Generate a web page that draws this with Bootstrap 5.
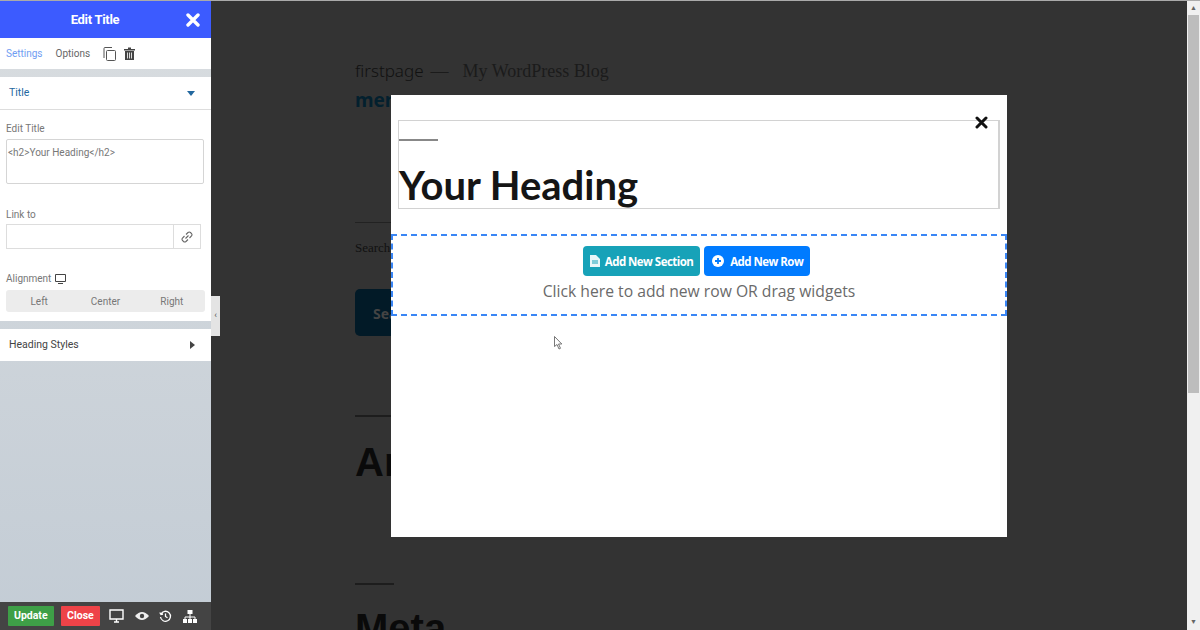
<!DOCTYPE html>
<html lang="en"><head><meta charset="utf-8"><title>Edit Title</title>
<link href="https://cdn.jsdelivr.net/npm/bootstrap@5.3.0/dist/css/bootstrap.min.css" rel="stylesheet">
<style>
html,body{height:630px;overflow:hidden;margin:0}
body{font-family:Roboto,sans-serif;background:#333;position:relative}
.stage{height:630px;border-top:1px solid #aaa}
.panel{width:211px;flex:none;height:629px;background:linear-gradient(#d9dde0,#c3ccd5);color:#666;font-size:10px}
.ph{height:37px;background:#3c5bff;color:#fff;font-size:13px;font-weight:700;letter-spacing:-.3px;padding-right:11px}
.ph span{flex:1;text-align:center;padding-left:4px}
.tabs{height:31px;background:#fff;font-size:10px;padding-left:6px;gap:13px}
.tabs .on{color:#6f9df2}
.sec{background:#fff}
.acc{height:33px;padding:0 16px 0 9px;font-size:10.5px;border-bottom:1px solid #ddd}
.acc.t{color:#23689f;margin-top:8px}
.acc.h{color:#444;border:0;height:32px;margin-top:8px}
.body1{height:211px;padding:0 6px;position:relative}
.lbl{display:block;font-size:10px;color:#777;line-height:12px}
.l1{padding-top:13px}
.l2{margin-top:25px}
.l3{margin-top:24px}
.ta{height:45px;width:198px;border:1px solid #d5d5d5;border-radius:2px;font-size:10px;color:#777;padding:5px 1px;margin-top:4px}
.lnk{height:25px;width:195px;border:1px solid #ddd;margin-top:3px}
.lnk i{margin-left:auto;width:27px;border-left:1px solid #ddd}
.seg{height:22px;width:199px;background:#ececec;border-radius:3px;color:#777;margin-top:5px}
.seg span{flex:1;text-align:center}
.hdl{position:absolute;left:211px;top:296px;width:9px;height:40px;background:#e4e4e4;color:#555;font-size:9px}
.foot{height:28px;background:#444;margin-top:auto;padding-left:8px}
.fb{height:20px;padding:0 6px;color:#fff;font-size:10.5px;font-weight:700;border-radius:1px}
.fb.u{background:#3e9f47}.fb.c{background:#ee4348;margin-left:7px;margin-right:9px;padding:0 6.500px}
.ticons{gap:10.500px}
.page{flex:1;padding:58px 0 0 144px;color:#111;overflow:hidden}
.p1{font:300 17px "Noto Sans",sans-serif;height:28px;white-space:nowrap;color:#111}
.p1 em{font:18px "Liberation Serif",serif;color:#1b1b1b;font-style:normal;margin-left:7px}
.p1 em.tg{margin-left:14px}
.p2{font:700 19px "Noto Sans",sans-serif;color:#03202e;height:135px}
.rule{height:1px;width:295px;background:#222}
.srch{font:13px "Liberation Serif",serif;color:#111;height:66px;padding-top:17px}
.sbtn{width:90px;height:47px;background:#021a27;border-radius:5px;color:#444;font:700 14px "Noto Sans",sans-serif;padding:15px 0 0 18px}
.bar{width:39px;height:2px;background:#1d1d1d}
.b1{margin-top:79px}
.big{font:700 40px "Liberation Sans",sans-serif;color:#0a0a0a}
.a1{margin-top:23px;height:143px}
.a2{margin-top:21px}
.sb{width:13px;flex:none;background:#f0f0f0;height:629px;color:#666;font-size:7px;text-align:center;line-height:14px}
.sb div{height:378px;width:11px;margin:0 0 0 1px;background:#bdbdbd}
.sb .dn{margin-top:222px;display:block}
.dlg{position:absolute;left:391px;top:95px;width:616px;height:442px;background:#fff}
.xbtn{position:absolute;left:584px;top:21px;width:13px;height:13px}
.hbox{margin:25px 7px 0;height:89px;border:1px solid #d2d2d2;position:relative;border-right-width:2px}
.hbox .ln{width:39px;height:2px;background:#888;margin-top:18px}
.hbox h2{font:700 40px Lato,sans-serif;color:#151515;margin:18px 0 0 0;line-height:52px}
.zone{margin-top:25px;height:82px;border:2px dashed #3a86f5;text-align:center;padding-top:10px}
.btnrow{padding-right:5px}
.ab{height:30px;border-radius:4px;color:#fff;font:700 11.500px "Open Sans",sans-serif;letter-spacing:-.55px;padding:0 7px;gap:5px}
.ab.a{background:#17a2b8}.ab.b{background:#007bff;margin-left:4px;padding:0 7px 0 8px;gap:6px}
.hint{font:15.700px "Open Sans",sans-serif;color:#6a6a6a;line-height:22px;margin-top:4px}
.cur{position:absolute;left:163px;top:241px}
</style></head><body>
<div class="stage d-flex">
 <aside class="panel d-flex flex-column">
  <div class="ph d-flex align-items-center"><span>Edit Title</span>
   <svg width="14" height="14" viewBox="0 0 14 14"><path d="M2 2 12 12M12 2 2 12" stroke="#fff" stroke-width="3.4" stroke-linecap="round"/></svg></div>
  <div class="tabs d-flex align-items-center"><span class="on">Settings</span><span>Options</span>
   <span class="d-flex align-items-center gap-2">
   <svg width="13" height="14" viewBox="0 0 13 14" fill="none" stroke="#555"><rect x="3.5" y="3.5" width="9" height="10" rx="1"/><path d="M1 11V1.5q0-1 1-1h7"/></svg>
   <svg width="11" height="13" viewBox="0 0 11 13"><path d="M0 2h4V.5h3V2h4v1.4H0zM1 4h9v9H1z" fill="#444"/><path d="M3.5 5.5v6M5.5 5.5v6M7.5 5.5v6" stroke="#ddd"/></svg></span></div>
  <div class="sec acc t d-flex align-items-center justify-content-between"><span>Title</span>
   <svg width="8" height="5"><path d="M0 0h8L4 5z" fill="#23689f"/></svg></div>
  <div class="sec body1">
   <label class="lbl l1 mb-0">Edit Title</label>
   <div class="ta">&lt;h2&gt;Your Heading&lt;/h2&gt;</div>
   <label class="lbl l2 mb-0">Link to</label>
   <div class="lnk d-flex"><i class="d-flex align-items-center justify-content-center"><svg width="12" height="12" viewBox="0 0 12 12" fill="none" stroke="#666" stroke-width="1.1"><path d="M5 3.5 7 1.5q1.300-1 2.500 0l1 1q1 1.200 0 2.500L8.500 7M7 8.500l-2 2q-1.300 1-2.500 0l-1-1q-1-1.200 0-2.500L3.500 5M4.500 7.500l3-3"/></svg></i></div>
   <label class="lbl l3 d-flex align-items-center gap-1">Alignment <svg width="11" height="10" viewBox="0 0 11 10"><path d="M.5.500h10v7H.5zM3 9.500h5" fill="none" stroke="#444"/></svg></label>
   <div class="seg d-flex align-items-center"><span>Left</span><span>Center</span><span>Right</span></div>
  </div>
  <div class="sec acc h d-flex align-items-center justify-content-between"><span>Heading Styles</span>
   <svg width="5" height="8"><path d="M0 0l5 4-5 4z" fill="#444"/></svg></div>
  <div class="foot d-flex align-items-center">
   <span class="fb u d-flex align-items-center">Update</span><span class="fb c d-flex align-items-center">Close</span>
   <span class="d-flex align-items-center ticons">
    <svg width="15" height="14" viewBox="0 0 15 14"><path d="M1 1h13v9H1zM5 13h5M7.500 10v3" fill="none" stroke="#fff" stroke-width="1.400"/></svg>
    <svg width="14" height="10" viewBox="0 0 14 10"><path d="M0 5q7-8 14 0-7 8-14 0z" fill="#eee"/><circle cx="7" cy="5" r="2.200" fill="#444"/></svg>
    <svg width="13" height="13" viewBox="0 0 13 13" fill="none" stroke="#fff" stroke-width="1.300"><path d="M2 4a5 5 0 1 1-.5 3M.800 2.500 2 4.500l2-.5M6.500 3.500v3l2 1.200"/></svg>
    <svg width="14" height="13" viewBox="0 0 14 13" fill="none" stroke="#fff"><rect x="5" y=".5" width="4" height="3" fill="#fff"/><path d="M7 3.500v4M2 9V7h10v2M7 7v2"/><rect x="0.500" y="9.500" width="3" height="3" fill="#fff"/><rect x="5.500" y="9.500" width="3" height="3" fill="#fff"/><rect x="10.500" y="9.500" width="3" height="3" fill="#fff"/></svg>
   </span>
  </div>
 </aside>
 <main class="page">
  <div class="p1">firstpage<em>—</em><em class="tg">My WordPress Blog</em></div>
  <div class="p2">menu</div>
  <div class="rule"></div>
  <div class="srch">Search</div>
  <div class="sbtn">Search</div>
  <div class="bar b1"></div>
  <div class="big a1">Archives</div>
  <div class="bar"></div>
  <div class="big a2">Meta</div>
 </main>
 <div class="sb"><span>▲</span><div></div><span class="dn">▼</span></div>
</div>
<div class="hdl d-flex align-items-center justify-content-center">‹</div>
<section class="dlg">
 <div class="hbox"><div class="ln"></div><h2>Your Heading</h2></div>
 <svg class="xbtn" viewBox="0 0 13 13"><path d="M2 2 11 11M11 2 2 11" stroke="#111" stroke-width="3" stroke-linecap="round"/></svg>
 <div class="zone">
  <div class="d-flex justify-content-center btnrow">
   <span class="ab a d-inline-flex align-items-center"><svg width="10" height="12" viewBox="0 0 10 12"><path d="M0 0h6l4 4v8H0z" fill="#e8f6f8"/><path d="M2 6h6M2 8h6" stroke="#17a2b8"/></svg>Add New Section</span>
   <span class="ab b d-inline-flex align-items-center"><svg width="12" height="12" viewBox="0 0 12 12"><circle cx="6" cy="6" r="6" fill="#fff"/><path d="M6 3v6M3 6h6" stroke="#007bff" stroke-width="1.800"/></svg>Add New Row</span>
  </div>
  <div class="hint">Click here to add new row OR drag widgets</div>
 </div>
 <svg class="cur" width="9" height="14" viewBox="0 0 9 14"><path d="M.5.500v10l2.500-2 2 4.500 1.500-.7-2-4.300h3.300z" fill="#fff" stroke="#555" stroke-width=".8"/></svg>
</section>
<script src="https://cdn.jsdelivr.net/npm/bootstrap@5.3.0/dist/js/bootstrap.bundle.min.js"></script>
</body></html>
